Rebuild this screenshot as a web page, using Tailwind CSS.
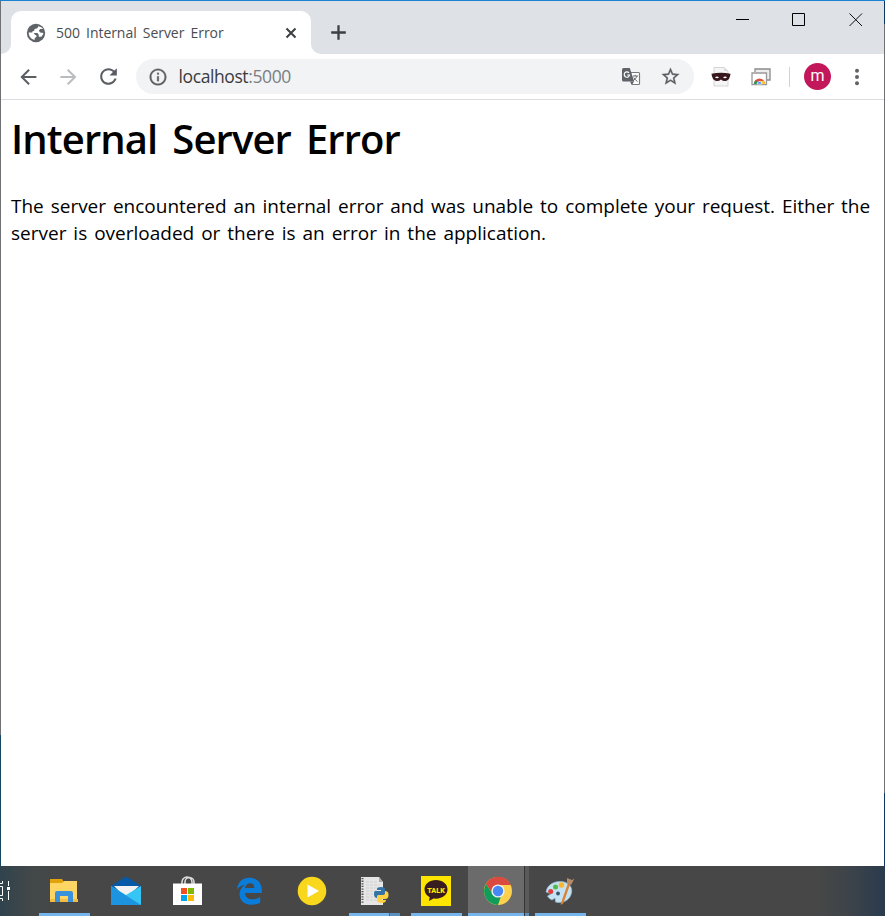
<!DOCTYPE html>
<html lang="en">
<head>
<meta charset="utf-8">
<title>500 Internal Server Error</title>
<script src="https://cdn.jsdelivr.net/npm/@tailwindcss/browser@4"></script>
</head>
<body class="w-[885px] h-[916px] overflow-hidden bg-white font-['Open_Sans','Noto_Sans',sans-serif]">
<div class="flex flex-col w-[885px] h-[916px]">
  <div class="h-px bg-[#1b82d2] shrink-0"></div>
  <div class="flex h-[865px] shrink-0">
    <div class="w-px flex flex-col shrink-0"><div class="h-[734px] bg-[#6f7073]"></div><div class="flex-1 bg-[#174a60]"></div></div>
    <main class="flex-1 flex flex-col">
      <!-- tab strip -->
      <div class="h-[53px] shrink-0 bg-[#dee1e6] flex items-start">
        <div class="w-[10px] h-[53px] bg-white shrink-0"><div class="size-full bg-[#dee1e6] rounded-br-[10px]"></div></div>
        <div class="mt-[10px] w-[300px] h-[43px] bg-white rounded-t-[10px] flex items-center shrink-0">
          <svg class="ml-[14px] size-[22px] shrink-0" viewBox="0 0 24 24"><circle cx="12" cy="12" r="10" fill="#5f6368"/><path d="M14.500 4.500l-1 2.300-3 .8-.5 2-2 .7v1.700h5.500l1.500 2v2h2.800c1-1.100 2-2.200 2.300-4l-3.500-.5-1.500-2 1.500-2h3C18.800 6.200 17 4.800 14.500 4.500zM4 11.500c0 4 2.500 7.300 6.500 8.200v-2l2-1.500v-1.500l-2-1-1-2.200z" fill="#fff"/></svg>
          <span class="ml-[9px] w-[218px] whitespace-nowrap text-[14px] leading-5 tracking-[-0.050px] [word-spacing:2.600px] text-[#4a4d51]">500 Internal Server Error</span>
          <svg class="ml-[10px] size-[14px]" viewBox="0 0 14 14"><path d="M2.500 2.500l9 9M11.500 2.500l-9 9" stroke="#3c4043" stroke-width="2"/></svg>
        </div>
        <div class="w-[10px] h-[53px] bg-white shrink-0"><div class="size-full bg-[#dee1e6] rounded-bl-[10px]"></div></div>
        <svg class="ml-[9px] mt-[23px] size-4" viewBox="0 0 16 16"><path d="M8.500 1.200v14.600M1.200 8.500h14.600" stroke="#3c4043" stroke-width="2.300"/></svg>
        <div class="ml-auto flex -mr-px">
          <svg class="w-[57px] h-[37px]" viewBox="0 0 57 37"><path d="M22 18.500h13" stroke="#000" fill="none"/></svg>
          <svg class="w-[57px] h-[37px]" viewBox="0 0 57 37"><path d="M21.500 12.500h12v12h-12z" stroke="#000" fill="none"/></svg>
          <svg class="w-[57px] h-[37px]" viewBox="0 0 57 37"><path d="M21.500 12.500l12.500 12.500M34 12.500L21.500 25" stroke="#111" fill="none"/></svg>
        </div>
      </div>
      <!-- toolbar -->
      <div class="h-[46px] shrink-0 bg-white border-b border-[#dadce0] flex items-center pl-[15px]">
        <svg class="size-6 mr-4" viewBox="0 0 24 24"><path transform="translate(.4 0)" d="M20 11H7.830l5.590-5.590L12 4l-8 8 8 8 1.410-1.410L7.830 13H20v-2z" fill="#5a5e63"/></svg>
        <svg class="size-6 mr-4" viewBox="0 0 24 24"><path transform="translate(.4 0)" d="M12 4l-1.410 1.410L16.170 11H4v2h12.170l-5.580 5.590L12 20l8-8z" fill="#babcbe"/></svg>
        <svg class="size-[25px] mr-[15px]" viewBox="0 0 24 24"><path d="M17.650 6.350C16.200 4.900 14.210 4 12 4c-4.420 0-7.990 3.580-7.990 8s3.570 8 7.990 8c3.730 0 6.840-2.550 7.730-6h-2.080c-.82 2.330-3.040 4-5.650 4-3.310 0-6-2.690-6-6s2.690-6 6-6c1.660 0 3.140.69 4.220 1.780L13 11h7V4l-2.350 2.350z" fill="#5a5e63"/></svg>
        <div class="w-[558px] h-[35px] rounded-full bg-[#f1f3f4] flex items-center shrink-0">
          <svg class="ml-[12px] size-5 shrink-0" viewBox="0 0 24 24"><path d="M11 7h2v2h-2zm0 4h2v6h-2zm1-9C6.480 2 2 6.480 2 12s4.480 10 10 10 10-4.480 10-10S17.520 2 12 2zm0 18c-4.410 0-8-3.590-8-8s3.590-8 8-8 8 3.590 8 8-3.590 8-8 8z" fill="#5a5e63" stroke="#5a5e63" stroke-width=".3"/></svg>
          <span class="ml-[10.500px] -mt-[2px] text-[17.500px] leading-6 tracking-[-0.400px] text-[#3a3b3e]">localhost<span class="text-[#7a7e83]">:5000</span></span>
          <svg class="ml-auto size-[20px]" viewBox="0 0 20 20"><path d="M9 5.500h8.500q1 0 1 1v10q0 1-1 1H11" fill="#fff" stroke="#77797c" stroke-width="1.200"/><path d="M2.500 1h6.300l4.400 13.500H2.500q-1.500 0-1.500-1.500V2.500Q1 1 2.500 1z" fill="#5f6368"/><path d="M9 14.500h4.200L10.700 18z" fill="#5f6368"/><path d="M8 5.800a2.700 2.700 0 1 0 .6 2.200H6.200" fill="none" stroke="#fff" stroke-width="1.200"/><path d="M11.800 9H17M14.200 7.800V9M16 9q-.8 3-4 4.800M12.800 10.500q1 2.300 3.700 4" fill="none" stroke="#6a6d70"/></svg>
          <svg class="ml-[19px] mr-[13px] size-[21px]" viewBox="0 0 24 24"><path d="M22 9.240l-7.190-.62L12 2 9.190 8.630 2 9.240l5.460 4.730L5.820 21 12 17.270 18.180 21l-1.630-7.030L22 9.240zM12 15.400l-3.760 2.270 1-4.280-3.320-2.880 4.380-.38L12 6.100l1.710 4.040 4.380.38-3.320 2.880 1 4.280L12 15.400z" fill="#5a5e63" stroke="#5a5e63" stroke-width=".3"/></svg>
        </div>
        <svg class="ml-[17px] size-5" viewBox="0 0 20 20"><path d="M3 .5h10L17 4v15H3z" fill="#f5f5f5" stroke="#ccc" stroke-width=".8"/><path d="M13 .5V4h4" fill="#ddd"/><path d="M.5 6.800Q10 4.800 19.500 6.800q-.5 6-4.500 7.200-3 .5-5-1.500-2 2-5 1.500Q1 12.800.5 6.800z" fill="#38171a"/><path d="M4 10.300q2-1.700 4 .2-2.200 1.500-4-.2zM12 10.500q2.200-1.900 4-.2-1.800 1.700-4 .2z" fill="#fff"/></svg>
        <svg class="ml-[20px] size-5" viewBox="0 0 20 20"><path d="M4 5V2h15v11h-3" fill="#eee" stroke="#8a8a8a" stroke-width="1.300"/><path d="M1 6h14.500v11.500H1z" fill="#fff" stroke="#999" stroke-width="1.300"/><path d="M3 17a5.500 5.500 0 0 1 11 0z" fill="#dd4b39"/><path d="M3 17a5.500 5.500 0 0 1 1.500-3.700L8 17z" fill="#219b55"/><path d="M14 17a5.500 5.500 0 0 0-1.200-3.300L8 14v3z" fill="#fcc934"/><path d="M6 17a2.500 2.500 0 0 1 5 0z" fill="#4285f4" stroke="#fff" stroke-width=".7"/></svg>
        <div class="ml-[18px] w-px h-5 bg-[#d0d2d5]"></div>
        <div class="ml-[14px] size-[27px] rounded-full bg-[#c2185b] text-white text-[16px] leading-[26px] text-center font-['Roboto']">m</div>
        <svg class="ml-[16px] size-5" viewBox="0 0 20 20" fill="#5f6368"><circle cx="10" cy="3.800" r="2"/><circle cx="10" cy="10" r="2"/><circle cx="10" cy="16.200" r="2"/></svg>
      </div>
      <!-- page -->
      <div class="flex-1 bg-white pl-[10px] text-black">
        <h1 class="pt-[12px] text-[40px] leading-[54px] font-semibold tracking-[-0.900px] [word-spacing:5.500px] whitespace-nowrap">Internal Server Error</h1>
        <p class="mt-[27px] text-[19px] leading-[27px] whitespace-nowrap"><span class="tracking-[-0.010px] [word-spacing:2px]">The server encountered an internal error and was unable to complete your request. Either the</span><br><span class="[word-spacing:2px]">server is overloaded or there is an error in the application.</span></p>
      </div>
    </main>
    <div class="w-px flex flex-col shrink-0"><div class="h-[23px] bg-[#0d3866]"></div><div class="h-[769px] bg-[#6f7073]"></div><div class="flex-1 bg-[#0d3866]"></div></div>
  </div>
  <!-- taskbar -->
  <div class="h-[50px] shrink-0 flex bg-[linear-gradient(90deg,#30434d_0px,#424849_30px,#474747_60px,#474747_815px,#3f4449_845px,#2a3b4d_885px)]">
    <svg class="w-[33px] h-[50px]" viewBox="0 0 33 50"><path d="M0 20.500h2.500V29.500H0M0 17.500h2.500V15M0 32.500h2.500V35M8.500 15v5M8.500 25v9" fill="none" stroke="#fff"/><path d="M7 21h3v3H7z" fill="#fff"/></svg>
    <div class="w-[62px] flex flex-col items-center justify-between">
      <svg class="mt-[10px] size-[30px]" viewBox="0 0 30 30"><path d="M1 3h12l2 3v3H1z" fill="#e2a20c"/><path d="M1 7h12l2-2h13v20H1z" fill="#ffd563"/><path d="M1 23h28v3H1z" fill="#f2bd42"/><path d="M6 26V17q0-2 2-2h14q2 0 2 2v9h-5v-6h-8v6z" fill="#3a91dc"/></svg>
      <div class="w-[51px] h-[3px] bg-[#76b4ec]"></div>
    </div>
    <div class="w-[62px] flex justify-center">
      <svg class="mt-[10px] size-[30px]" viewBox="0 0 30 30"><path d="M0 10L13 1.500q2-1 4 0L30 10v4H0z" fill="#0759a8"/><path d="M3 10h25L15 22z" fill="#f2f2f2"/><path d="M0 10l15 9 15-9v19H0z" fill="#36c5f4"/><path d="M0 10l30 19H0z" fill="#1d94df"/></svg>
    </div>
    <div class="w-[62px] flex justify-center">
      <svg class="mt-[9px] size-[31px] -ml-px" viewBox="0 0 31 31"><path d="M10 10V7a5 5 0 0 1 10 0v3M13 10V7a4.500 4.500 0 0 1 9 0v3" fill="none" stroke="#ddd" stroke-width="1.500"/><path d="M1 8.500h29V30H1z" fill="#fff"/><path d="M9 13h6v6H9z" fill="#f25022"/><path d="M16 13h6v6h-6z" fill="#7fba00"/><path d="M9 20h6v6H9z" fill="#00a4ef"/><path d="M16 20h6v6h-6z" fill="#ffb900"/></svg>
    </div>
    <div class="w-[62px] flex justify-center">
      <svg class="mt-[11px] w-[25px] h-[28px] -ml-px" viewBox="0 0 25 28"><path d="M0 12.500C1 4.500 6 .8 12.500.8 20 .8 24.800 6 24.800 13v3H8c.3 4.500 3.500 6.300 7.500 6.300 3 0 5.500-.8 7.700-2.200v5.700c-2.500 1.300-5.500 1.900-9 1.900C7 27.700 2.600 23.500 2.600 17.500c0-4.500 2.200-8 5.700-9.800C5 8 2 9.500 0 12.500zM8.100 11h9.300c0-3-1.400-4.700-4.200-4.700C10.500 6.300 8.700 8 8.100 11z" fill="#0a7ddb"/></svg>
    </div>
    <div class="w-[62px] flex justify-center">
      <svg class="mt-[10px] size-[30px]" viewBox="0 0 30 30"><circle cx="15" cy="15" r="14.300" fill="#f8d71c"/><path d="M10.500 8.500L22 15l-11.500 6.500z" fill="#fff"/></svg>
    </div>
    <div class="w-[62px] flex flex-col justify-between">
      <svg class="mt-[10px] ml-[17px] size-[30px]" viewBox="0 0 30 30"><path d="M1 1h18l4 5v23H1z" fill="#e6e6e6"/><path d="M19 1l4 5h-4z" fill="#aaa"/><path d="M2.500 2v26" stroke="#555" stroke-width="2" stroke-dasharray="1.300 1.300"/><path d="M6 6h11M6 9h13M6 12h12M6 15h9M6 18h7M6 21h8M6 24h11" stroke="#d0d0d0" stroke-dasharray="3 1"/><path d="M17 13q0-2 4-2t4 2v4q0 2-2 2h-4q-2 0-2 3-3 0-3-4t3-3h4v-1h-4z" fill="#3473a8"/><path d="M25 15q3.500 0 3.500 4t-3.500 4h-3v1h4q0 3-4.500 3T17 24v-3q0-2 2-2h4q2 0 2-2z" fill="#ffd040"/></svg>
      <div class="ml-[6px] flex h-[3px]"><div class="w-10 bg-[#76b4ec]"></div><div class="w-px bg-[#43698c]"></div><div class="w-[10px] bg-[#5c8fbd]"></div></div>
    </div>
    <div class="w-[62px] flex flex-col items-center justify-between">
      <div class="mt-[10px] size-[30px]"><svg class="size-[30px]" viewBox="0 0 30 30"><path d="M0 0h30v30H0z" fill="#fee500"/><path d="M15 4C8.500 4 3.500 8 3.500 13.300c0 3.500 2 6.400 5.200 8L8 25l4.500-2.500c8.500 1 14-3.500 14-9.200C26.500 8 21.500 4 15 4z" fill="#371d1e"/><text x="15" y="16.500" text-anchor="middle" font-family="Roboto" font-weight="900" font-size="8" textLength="17.500" lengthAdjust="spacingAndGlyphs" fill="#fee500">TALK</text></svg></div>
      <div class="w-[51px] h-[3px] bg-[#76b4ec]"></div>
    </div>
    <div class="w-[62px] pl-px flex">
      <div class="w-[56px] bg-[#6b6b6b] flex flex-col justify-between">
        <svg class="mt-[10px] ml-[15px] size-[30px]" viewBox="0 0 30 30"><circle cx="15" cy="15" r="14" fill="#ffd04b"/><path d="M2.900 8A14 14 0 0 1 27.900 9H15l-5.200 9z" fill="#db4a3f"/><path d="M2.900 8L9.800 18l5.200 3 3-.8L15 29A14 14 0 0 1 2.900 8z" fill="#109c5a"/><circle cx="15" cy="15" r="6.600" fill="#f1f1f1"/><circle cx="15" cy="15" r="5.200" fill="#4688f4"/></svg>
        <div class="h-[3px] bg-[#76b4ec]"></div>
      </div>
      <div class="w-px bg-[#353535]"></div>
      <div class="w-1 bg-[#5a5a5a] flex items-end"><div class="w-1 h-[3px] bg-[#5c8fbd]"></div></div>
    </div>
    <div class="w-[62px] flex flex-col items-center justify-between">
      <svg class="mt-[10px] size-[30px]" viewBox="0 0 30 30"><path d="M1 16C2 9 9 5 16 5.500c7 .5 12 5 10.500 11.500C25 24 18 28 10.500 26l-.5-4-3 2c-2-1-3.500-2-4.500-4l3.500-2z" fill="#c4e2f2" stroke="#8eb9d2" stroke-width=".7"/><circle cx="5.700" cy="15.500" r="2.500" fill="#dd3e3b"/><circle cx="10.500" cy="11" r="2.500" fill="#55b948"/><circle cx="16.500" cy="9" r="2.800" fill="#fcb52c"/><circle cx="13" cy="17.500" r="1.900" fill="#34566a"/><path d="M23 7l2 1.500L18.500 27q-1.500 2-3 1.500z" fill="#d98134"/><path d="M22 2l5 2 2.500-1.500L26 9l-4-2z" fill="#b78b66"/></svg>
      <div class="w-[51px] h-[3px] bg-[#76b4ec]"></div>
    </div>
  </div>
</div>
</body>
</html>
